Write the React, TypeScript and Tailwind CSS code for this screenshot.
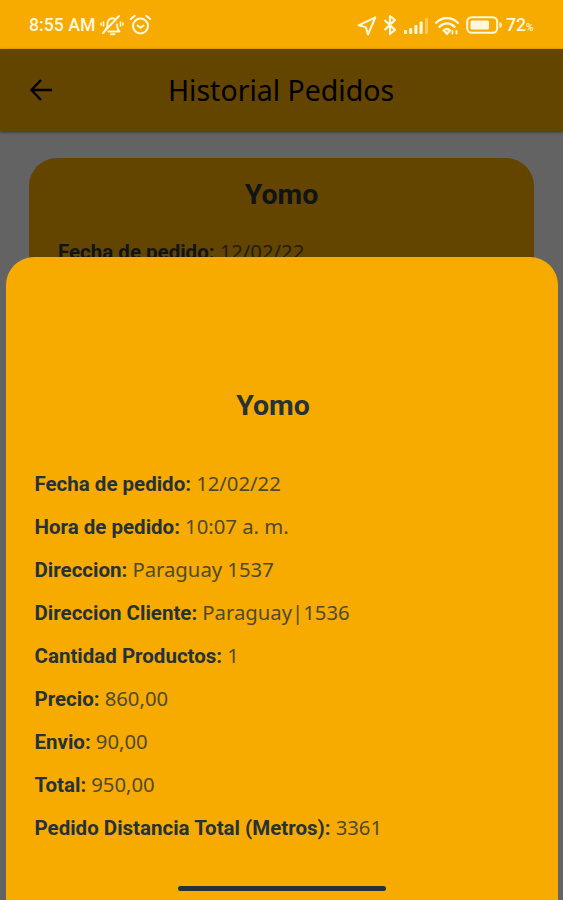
import React from "react";

const details: [string, string][] = [
  ["Fecha de pedido:", "12/02/22"],
  ["Hora de pedido:", "10:07 a. m."],
  ["Direccion:", "Paraguay 1537"],
  ["Direccion Cliente:", "Paraguay|1536"],
  ["Cantidad Productos:", "1"],
  ["Precio:", "860,00"],
  ["Envio:", "90,00"],
  ["Total:", "950,00"],
  ["Pedido Distancia Total (Metros):", "3361"],
];

function Detail({ label, value, dim }: { label: string; value: string; dim?: boolean }) {
  return (
    <p className={`flex h-[43px] items-baseline whitespace-pre text-[20.5px] leading-[43px] ${dim ? "text-[#111417]" : "text-[#263238]"}`}>
      <span className="font-['Roboto',sans-serif] font-bold">{label} </span>
      <span className="font-['Noto_Sans',sans-serif] text-[20.3px] font-normal opacity-80">{value}</span>
    </p>
  );
}

function StatusBar() {
  return (
    <div className="flex h-[49px] items-center bg-[#f7ab00] pl-[29px] pt-[2px] text-[#fff8df]">
      <span className="w-[68px] whitespace-nowrap font-['Roboto',sans-serif] text-[17.7px] font-medium leading-none">8:55 AM</span>
      <svg className="-mt-[2px] ml-[2px]" width="26" height="24" viewBox="0 0 26 24" fill="none" stroke="currentColor" strokeWidth="1.9" strokeLinecap="round" strokeLinejoin="round">
        <path d="M9.500 18.500h11c-2-1.800-2.500-3.500-2.500-7M16 6a5 5 0 0 0-7.500 4.500c0 2.500-.3 4.500-2 6M20 3 4 20M12 21.200h3.500" />
        <path d="M4.500 9v4M2 10v2M21.500 9v4M24 10v2" strokeWidth="1.600" />
      </svg>
      <svg className="-mt-[2px] ml-[4px]" width="23" height="22" viewBox="0 0 23 22" fill="none" stroke="currentColor" strokeWidth="2" strokeLinecap="round" strokeLinejoin="round">
        <circle cx="11.500" cy="12" r="7.500" />
        <path d="m1.800 5 4-3.300M21.200 5l-4-3.300M8.500 11.500l3 2.300 3-2.300" />
      </svg>
      <svg className="ml-[205px]" width="20" height="20" viewBox="0 0 20 20" fill="none" stroke="currentColor" strokeWidth="2" strokeLinejoin="round">
        <path d="M18.300 1.500 1.500 9.300l7.300 1.800 2.200 7.400z" />
      </svg>
      <svg className="-mt-[1px] ml-[6px]" width="15" height="22" viewBox="0 0 15 22" fill="none" stroke="currentColor" strokeWidth="2.200" strokeLinejoin="round">
        <path d="m1.500 6 10.500 10-5 4V2l5 4L1.500 16" />
      </svg>
      <svg className="ml-[6px]" width="25" height="18" viewBox="0 0 25 18" fill="currentColor">
        <rect x="0" y="13" width="3" height="4" rx="1" />
        <rect x="5.200" y="11" width="3" height="6" rx="1" />
        <rect x="10.400" y="8" width="3" height="9" rx="1" />
        <rect x="15.600" y="4.500" width="3" height="12.500" rx="1" />
        <rect x="21" y="1" width="3" height="16" rx="1" opacity=".4" />
      </svg>
      <svg className="ml-[5px]" width="26" height="20" viewBox="0 0 26 20" fill="none" stroke="currentColor" strokeWidth="2.300" strokeLinecap="round">
        <path d="M2 7c6-6.500 16-6.500 22 0M5.500 10.800c4.300-4.500 10.700-4.500 15 0M9.500 14.500c2.200-2 4.500-2 6.500 0" />
        <path d="m10.800 15.500 2.200 2.300 2-2.300" />
        <path d="M18.500 15v2.500M22.500 15v2.500" strokeWidth="1.800" />
      </svg>
      <svg className="-mt-[2px] ml-[6px]" width="36" height="18" viewBox="0 0 36 18" fill="none">
        <rect x="1.200" y="1.200" width="30" height="15.600" rx="4.500" stroke="currentColor" strokeWidth="2" />
        <rect x="4.500" y="4.500" width="18.500" height="9" rx="1.500" fill="currentColor" />
        <path d="M33.500 6v6c1.700-.5 2.300-1.500 2.300-3s-.6-2.500-2.300-3z" fill="currentColor" />
      </svg>
      <span className="ml-[4px] flex items-baseline font-['Roboto',sans-serif] text-[17.7px] font-medium leading-none">
        72<span className="text-[10px]">%</span>
      </span>
    </div>
  );
}

export default function App() {
  return (
    <main className="relative h-[900px] w-[563px] overflow-hidden bg-[#636363]">
      <StatusBar />
      <header className="flex h-[82px] items-center bg-[#634500] text-black shadow-[0_1px_3px_rgba(0,0,0,0.5)]">
        <svg className="ml-[29px]" width="24" height="24" viewBox="0 0 24 24" fill="none" stroke="currentColor" strokeWidth="2.400">
          <path d="M23 12H3M12 2 2.500 12l9.500 10" />
        </svg>
        <h1 className="ml-[115px] whitespace-nowrap font-['Noto_Sans',sans-serif] text-[28.5px] leading-none">Historial Pedidos</h1>
      </header>
      <section className="ml-[29px] mt-[27px] h-[200px] w-[505px] rounded-[28px] bg-[#634500] px-[29px] pt-[16px]">
        <h2 className="text-center font-['Roboto',sans-serif] text-[28.5px] font-bold leading-[42px] text-[#111417]">Yomo</h2>
        <div className="pt-[14px]">
          <Detail label="Fecha de pedido:" value="12/02/22" dim />
        </div>
      </section>
      <section className="absolute bottom-0 left-[6px] top-[257px] w-[552px] rounded-t-[28px] bg-[#f7ab00] pl-[28.5px] pt-[128px]">
        <h2 className="w-[477px] text-center font-['Roboto',sans-serif] text-[28.5px] font-bold leading-[42px] text-[#263238]">Yomo</h2>
        <div className="pt-[35px]">
          {details.map(([label, value]) => (
            <Detail key={label} label={label} value={value} />
          ))}
        </div>
        <div className="ml-[143.5px] mt-[37px] h-[5px] w-[208px] rounded-full bg-[#263238]" />
      </section>
    </main>
  );
}
